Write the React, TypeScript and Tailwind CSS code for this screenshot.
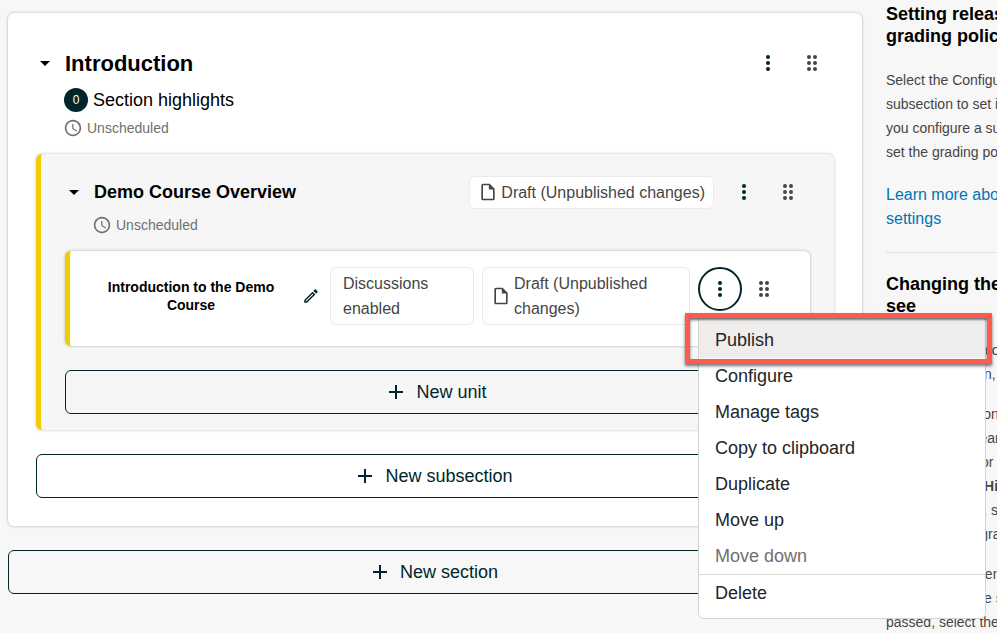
import type { ReactNode } from "react";

type IconProps = { className?: string };

function CaretIcon() {
  return (
    <svg viewBox="3 3 18 18" className="size-[18px]" fill="currentColor" aria-hidden="true">
      <path d="m7 10 5 5 5-5H7z" />
    </svg>
  );
}

function ClockIcon() {
  return (
    <svg viewBox="1 1 22 22" className="size-[18px] shrink-0" fill="currentColor" aria-hidden="true">
      <path d="M11.99 2C6.47 2 2 6.48 2 12s4.47 10 9.99 10C17.52 22 22 17.52 22 12S17.52 2 11.99 2zM12 20c-4.42 0-8-3.58-8-8s3.58-8 8-8 8 3.58 8 8-3.58 8-8 8zm.5-13H11v6l5.25 3.15.75-1.23-4.5-2.67V7z" />
    </svg>
  );
}

function FileIcon() {
  return (
    <svg viewBox="0 0 24 24" className="size-5 shrink-0" fill="currentColor" aria-hidden="true">
      <path d="M14 2H6c-1.1 0-1.99.9-1.99 2L4 20c0 1.1.89 2 1.99 2H18c1.1 0 2-.9 2-2V8l-6-6zM6 20V4h7v5h5v11H6z" />
    </svg>
  );
}

function PencilIcon() {
  return (
    <svg viewBox="0 0 24 24" className="size-[18px]" fill="currentColor" aria-hidden="true">
      <path d="m14.06 9.02.92.92L5.92 19H5v-.92l9.06-9.06M17.66 3c-.25 0-.51.1-.7.29l-1.83 1.83 3.75 3.75 1.83-1.83c.39-.39.39-1.02 0-1.41l-2.34-2.34c-.2-.2-.45-.29-.71-.29zm-3.6 3.19L3 17.25V21h3.75L17.81 9.94l-3.75-3.75z" />
    </svg>
  );
}

function PlusIcon() {
  return (
    <svg viewBox="4 4 16 16" className="size-4" fill="currentColor" aria-hidden="true">
      <path d="M19 13h-6v6h-2v-6H5v-2h6V5h2v6h6v2z" />
    </svg>
  );
}

function KebabIcon({ className = "" }: IconProps) {
  return (
    <svg viewBox="0 0 24 24" className={`size-6 ${className}`} fill="currentColor" aria-hidden="true">
      <circle cx="12" cy="6" r="2" />
      <circle cx="12" cy="12" r="2" />
      <circle cx="12" cy="18" r="2" />
    </svg>
  );
}

function DragIcon() {
  return (
    <svg viewBox="0 0 24 24" className="size-6" fill="currentColor" aria-hidden="true">
      <circle cx="9" cy="6" r="2" />
      <circle cx="9" cy="12" r="2" />
      <circle cx="9" cy="18" r="2" />
      <circle cx="15" cy="6" r="2" />
      <circle cx="15" cy="12" r="2" />
      <circle cx="15" cy="18" r="2" />
    </svg>
  );
}

function IconButton({ label, className = "", children }: { label: string; className?: string; children: ReactNode }) {
  return (
    <button
      type="button"
      aria-label={label}
      className={`flex size-11 shrink-0 items-center justify-center rounded-full ${className}`}
    >
      {children}
    </button>
  );
}

function Actions() {
  return (
    <div className="flex">
      <IconButton label="More actions" className="text-[#00262b]">
        <KebabIcon />
      </IconButton>
      <IconButton label="Drag to reorder" className="text-[#454545]">
        <DragIcon />
      </IconButton>
    </div>
  );
}

function Unscheduled() {
  return (
    <p className="flex h-[21px] items-center gap-[5px] text-sm text-[#707070]">
      <ClockIcon />
      Unscheduled
    </p>
  );
}

function AddButton({ children }: { children: ReactNode }) {
  return (
    <button
      type="button"
      className="flex h-11 w-full items-center justify-center gap-3 rounded-md border border-[#00262b] text-lg text-[#00262b]"
    >
      <PlusIcon />
      {children}
    </button>
  );
}

function Chip({ className = "", icon, children }: { className?: string; icon?: ReactNode; children: ReactNode }) {
  return (
    <div
      className={`flex items-center gap-[3px] rounded-md border border-[#ebebeb] bg-white py-[3px] text-base leading-[25px] text-[#454545] ${className}`}
    >
      {icon}
      <span>{children}</span>
    </div>
  );
}

const menuItems = ["Configure", "Manage tags", "Copy to clipboard", "Duplicate", "Move up"];

function UnitMenu() {
  return (
    <div className="absolute top-[47px] left-0 z-10 w-72 rounded-md border border-[#d3d3d3] bg-white py-[7px] text-lg leading-6 text-[#212529]">
      <button type="button" className="block h-9 w-full bg-[#efedeb] px-4 text-left">
        Publish
      </button>
      {menuItems.map((item) => (
        <button key={item} type="button" className="block h-9 w-full px-4 text-left">
          {item}
        </button>
      ))}
      <button type="button" disabled className="block h-9 w-full px-4 text-left text-[#707070]">
        Move down
      </button>
      <button type="button" className="block h-[37px] w-full border-t border-[#dcd8d4] px-4 text-left">
        Delete
      </button>
      <div className="pointer-events-none absolute -top-0.5 -left-3.5 h-[51px] w-[307px] border-[5px] border-[#ff5a4d] shadow-[0_2px_3px_rgba(0,0,0,0.55),inset_0_2px_3px_rgba(0,0,0,0.6)]" />
    </div>
  );
}

function UnitCard() {
  return (
    <div className="flex items-start rounded-md border-l-[5px] border-[#f0cc00] bg-white pt-4 pr-6 pb-[21px] pl-6 shadow-[0_0_3px_rgba(0,0,0,0.3)]">
      <div className="flex flex-1 items-center self-stretch">
        <h4 className="flex-1 text-center text-sm leading-[18px] font-bold text-black">
          Introduction to the Demo Course
        </h4>
        <button
          type="button"
          aria-label="Edit unit name"
          className="mr-2 ml-3 flex h-6 w-[22px] items-center justify-center text-[#00262b]"
        >
          <PencilIcon />
        </button>
      </div>
      <Chip className="mr-2 w-36 px-3">Discussions enabled</Chip>
      <Chip className="mr-2 w-52 px-2" icon={<FileIcon />}>
        Draft (Unpublished changes)
      </Chip>
      <div className="relative">
        <IconButton label="Unit actions" className="border-2 border-[#00262b] text-[#00262b]">
          <KebabIcon />
        </IconButton>
        <UnitMenu />
      </div>
      <IconButton label="Drag to reorder" className="text-[#454545]">
        <DragIcon />
      </IconButton>
    </div>
  );
}

function SubsectionCard() {
  return (
    <section className="rounded-md border-l-[5px] border-[#f0cc00] bg-[#f6f6f6] px-6 py-4 shadow-[0_0_3px_rgba(0,0,0,0.25)]">
      <div className="flex h-11 items-center">
        <button type="button" className="flex items-center gap-[11px] text-lg font-bold text-black">
          <CaretIcon />
          Demo Course Overview
        </button>
        <div className="ml-auto flex items-center gap-2">
          <Chip className="px-2" icon={<FileIcon />}>
            Draft (Unpublished changes)
          </Chip>
          <Actions />
        </div>
      </div>
      <div className="mb-4 pl-7">
        <Unscheduled />
      </div>
      <UnitCard />
      <div className="mt-6">
        <AddButton>New unit</AddButton>
      </div>
    </section>
  );
}

function SectionCard() {
  return (
    <section className="rounded-md bg-white p-7 shadow-[0_0_3px_rgba(0,0,0,0.3)]">
      <div className="flex h-11 items-center justify-between">
        <button type="button" className="flex items-center gap-[11px] text-[22px] font-bold text-black">
          <CaretIcon />
          Introduction
        </button>
        <Actions />
      </div>
      <div className="mt-[3px] mb-4 pl-7">
        <button type="button" className="mb-[5px] flex h-6 items-center gap-[5px] text-lg text-black">
          <span className="flex size-6 items-center justify-center rounded-full bg-[#00262b] text-xs text-white">0</span>
          Section highlights
        </button>
        <Unscheduled />
      </div>
      <SubsectionCard />
      <div className="mt-6">
        <AddButton>New subsection</AddButton>
      </div>
    </section>
  );
}

function HelpSidebar() {
  return (
    <aside className="w-[111px] shrink-0 overflow-hidden pt-[3px]">
      <div className="w-[270px] text-sm leading-6 whitespace-nowrap text-[#454545]">
        <h3 className="mb-[21px] text-lg leading-[22px] font-bold text-black">
          Setting release dates and
          <br />
          grading policies
        </h3>
        <p>
          Select the Configure icon for a
          <br />
          subsection to set its release date. When
          <br />
          you configure a subsection, you can also
          <br />
          set the grading policy and due date.
        </p>
        <a href="#grading" className="mt-[19px] block text-base leading-6 text-[#0075b4]">
          Learn more about grading policy
          <br />
          settings
        </a>
        <hr className="mt-[21px] mb-5 border-[#dedede]" />
        <h3 className="mb-[21px] text-lg leading-[22px] font-bold text-black">
          Changing the content learners
          <br />
          see
        </h3>
        <p className="mb-4">
          To publish draft content, select the publish
          <br />
          icon for a section, subsection, or unit.
        </p>
        <p className="mb-4">
          To make a section, subsection, or unit
          <br />
          unavailable to learners, select the
          <br />
          configure icon for that level, then select
          <br />
          the appropriate <b>Hide</b> option. Grades for
          <br />
          hidden sections, subsections, and units are
          <br />
          not included in grade calculations.
        </p>
        <p>
          To hide the content of a subsection from
          <br />
          learners after the subsection due date has
          <br />
          passed, select the configure icon for a
        </p>
      </div>
    </aside>
  );
}

export default function App() {
  return (
    <div className="flex h-screen gap-6 overflow-hidden bg-[#f7f7f7] pl-2 font-['Helvetica_Neue','Liberation_Sans',Arial,sans-serif]">
      <main className="min-w-0 flex-1 pt-[13px]">
        <SectionCard />
        <div className="mt-6">
          <AddButton>New section</AddButton>
        </div>
      </main>
      <HelpSidebar />
    </div>
  );
}
